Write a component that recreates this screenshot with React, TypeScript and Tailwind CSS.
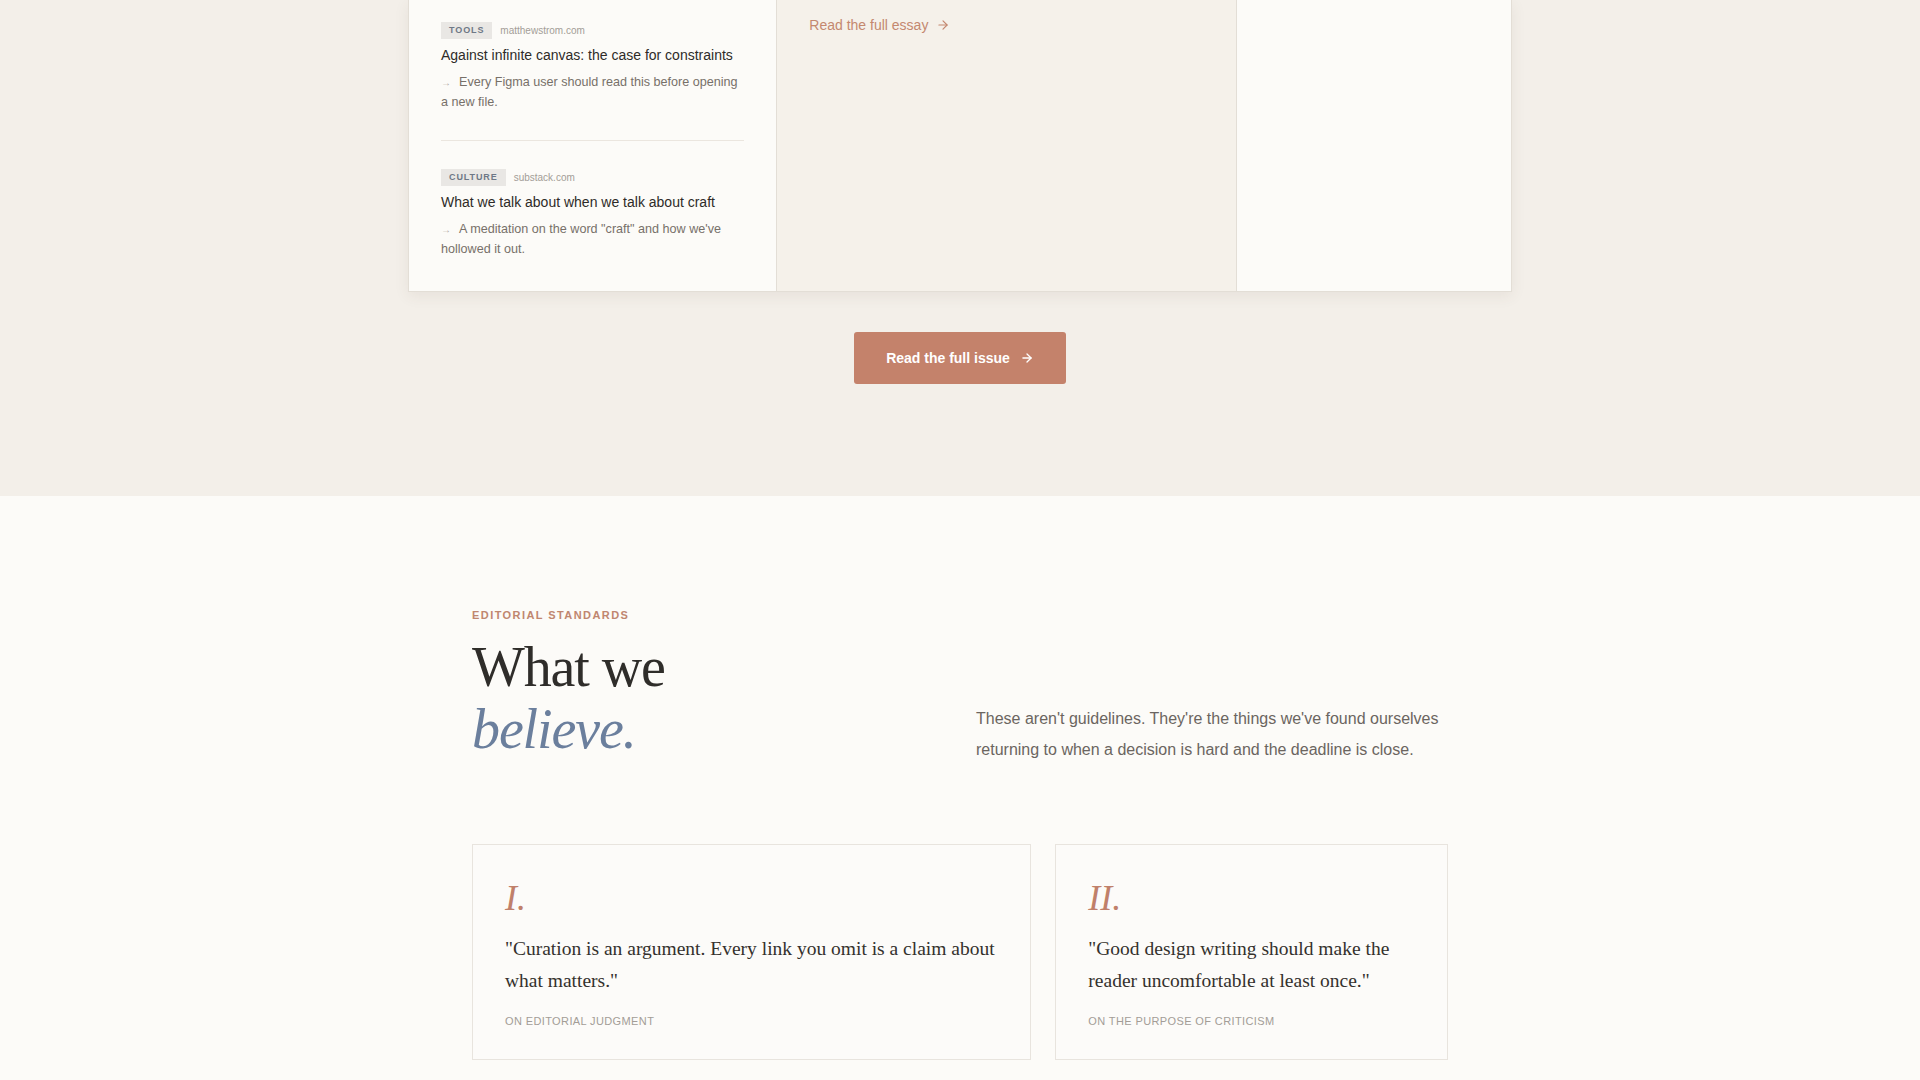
import { ArrowRight } from 'lucide-react';

const links = [
  {
    tag: 'TOOLS',
    domain: 'matthewstrom.com',
    title: 'Against infinite canvas: the case for constraints',
    note: 'Every Figma user should read this before opening a new file.',
  },
  {
    tag: 'CULTURE',
    domain: 'substack.com',
    title: 'What we talk about when we talk about craft',
    note: 'A meditation on the word "craft" and how we\'ve hollowed it out.',
  },
];

const beliefs = [
  {
    numeral: 'I.',
    quote: '"Curation is an argument. Every link you omit is a claim about what matters."',
    source: 'ON EDITORIAL JUDGMENT',
    span: 'col-span-7',
  },
  {
    numeral: 'II.',
    quote: '"Good design writing should make the reader uncomfortable at least once."',
    source: 'ON THE PURPOSE OF CRITICISM',
    span: 'col-span-5',
  },
];

function LinkItem({ item, first }: { item: (typeof links)[number]; first: boolean }) {
  return (
    <div className={first ? 'pt-[22px] pb-7 border-b border-[#ebe6df]' : 'pt-7 pb-7'}>
      <div className="flex items-center gap-2">
        <span className="bg-[#e9e7e4] px-2 py-1 text-[9px] font-bold leading-none tracking-[0.1em] text-[#6e7886]">
          {item.tag}
        </span>
        <span className="text-[10px] text-[#a39d97]">{item.domain}</span>
      </div>
      <h3 className="mt-1.5 text-[14px] leading-5 text-[#2e2b28]">{item.title}</h3>
      <p className="mt-[7px] text-[12.6px] leading-5 text-[#777069]">
        <span className="mr-2 inline-block align-baseline text-[10px] leading-none text-[#b3aca5]">→</span>
        {item.note}
      </p>
    </div>
  );
}

export default function App() {
  return (
    <div className="min-h-screen font-['Liberation_Sans',Arial,sans-serif]">
      {/* Issue preview */}
      <section className="bg-[#f3efe9] pb-28">
        <div className="mx-auto max-w-6xl px-6">
          <div className="grid grid-cols-12 border border-t-0 border-[#e3ded6] bg-[#fcfbf8] shadow-[0_4px_14px_rgba(90,70,50,0.08)]">
            <div className="col-span-4 px-8 pb-1">
              {links.map((item, i) => (
                <LinkItem key={item.tag} item={item} first={i === 0} />
              ))}
            </div>
            <div className="col-span-5 border-l border-[#e3ded6] bg-[#f5f1ea] px-8 pt-[13px]">
              <a href="#" className="inline-flex items-center gap-2 text-[14px] leading-5 text-[#c4886f]">
                Read the full essay
                <ArrowRight className="h-[14px] w-[14px]" strokeWidth={2} />
              </a>
            </div>
            <div className="col-span-3 border-l border-[#e3ded6]" />
          </div>

          <div className="mt-10 flex justify-center">
            <button className="inline-flex items-center gap-2.5 rounded-[3px] bg-[#c4826b] px-8 py-4 text-[14px] font-bold leading-5 text-white">
              Read the full issue
              <ArrowRight className="h-[14px] w-[14px]" strokeWidth={2.25} />
            </button>
          </div>
        </div>
      </section>

      {/* Editorial standards */}
      <section className="bg-[#fcfbf8] pt-[111px] pb-24">
        <div className="mx-auto max-w-5xl px-6">
          <div className="grid grid-cols-2 items-end gap-8">
            <div>
              <p className="mb-3 text-[11px] font-bold leading-[1.5] tracking-[0.13em] text-[#c0866f]">
                EDITORIAL STANDARDS
              </p>
              <h2 className="font-['Liberation_Serif','Times_New_Roman',serif] text-[56px] leading-[1.12] tracking-[-0.02em] text-[#2f2d2a]">
                What we
                <br />
                <em className="text-[#6b7f9d]">believe.</em>
              </h2>
            </div>
            <p className="-mb-1 text-[16px] leading-[31px] text-[#6b6560]">
              These aren't guidelines. They're the things we've found ourselves returning to when a decision is
              hard and the deadline is close.
            </p>
          </div>

          <div className="mt-[83px] grid grid-cols-12 gap-6">
            {beliefs.map((b) => (
              <div key={b.numeral} className={`${b.span} border border-[#e8e4de] bg-[#fcfbf9] px-8 pt-[35px] pb-[30px]`}>
                <div className="font-['Liberation_Serif','Times_New_Roman',serif] text-[36px] italic leading-none text-[#c0806a]">
                  {b.numeral}
                </div>
                <p className="mt-[17px] font-['Liberation_Serif','Times_New_Roman',serif] text-[19.5px] leading-[32px] text-[#34312d]">
                  {b.quote}
                </p>
                <p className="mt-4 text-[11px] tracking-[0.035em] text-[#a39d97]">{b.source}</p>
              </div>
            ))}
          </div>
        </div>
      </section>
    </div>
  );
}
